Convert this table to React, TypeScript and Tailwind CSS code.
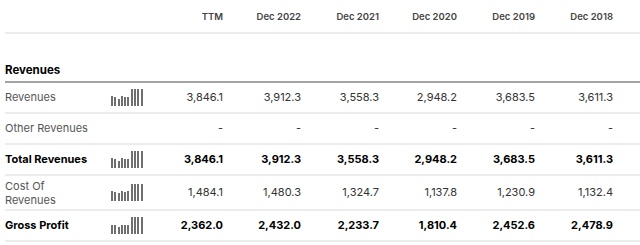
import React from "react";

type Row = {
  label: string;
  values: string[];
  bold?: boolean;
  bars?: number[];
  tall?: boolean;
};

const periods = ["TTM", "Dec 2022", "Dec 2021", "Dec 2020", "Dec 2019", "Dec 2018"];

const rows: Row[] = [
  {
    label: "Revenues",
    values: ["3,846.1", "3,912.3", "3,558.3", "2,948.2", "3,683.5", "3,611.3"],
    bars: [10, 9, 7, 10, 9, 9, 17, 17, 17, 17],
  },
  { label: "Other Revenues", values: ["-", "-", "-", "-", "-", "-"] },
  {
    label: "Total Revenues",
    values: ["3,846.1", "3,912.3", "3,558.3", "2,948.2", "3,683.5", "3,611.3"],
    bold: true,
    bars: [10, 9, 7, 10, 9, 9, 17, 17, 17, 17],
  },
  {
    label: "Cost Of Revenues",
    values: ["1,484.1", "1,480.3", "1,324.7", "1,137.8", "1,230.9", "1,132.4"],
    bars: [10, 9, 8, 10, 9, 10, 17, 17, 17, 17],
    tall: true,
  },
  {
    label: "Gross Profit",
    values: ["2,362.0", "2,432.0", "2,233.7", "1,810.4", "2,452.6", "2,478.9"],
    bold: true,
    bars: [9, 9, 7, 9, 9, 9, 17, 17, 17, 17],
  },
];

const grid = "grid grid-cols-[100px_40px_repeat(6,78px)_1fr]";

function Sparkbars({ bars }: { bars: number[] }) {
  return (
    <div className="flex h-[17px] items-end gap-[1.3px] pl-[6px]">
      {bars.map((h, i) => (
        <div key={i} className="w-[2px] bg-[#6f6f6f]" style={{ height: h }} />
      ))}
    </div>
  );
}

export default function App() {
  return (
    <div className="h-[245px] w-[640px] overflow-hidden bg-white pl-[5px] font-['Inter','Liberation_Sans',sans-serif] text-[11px] text-[#222]">
      <div className={`${grid} h-[34px] items-center border-b-2 border-[#ececec]`}>
        <div />
        <div />
        {periods.map((p) => (
          <div key={p} className="pt-[2px] text-right text-[9.5px] font-semibold text-[#444]">
            {p}
          </div>
        ))}
        <div />
      </div>
      <div className="flex h-[49px] items-end border-b-2 border-[#a3a3a3] pb-[2px] text-[11.5px] font-bold text-black">
        Revenues
      </div>
      {rows.map((r) => (
        <div
          key={r.label}
          className={`${grid} items-center border-b-2 border-[#ececec] ${r.tall ? "h-[35px]" : "h-[31px]"} ${
            r.bold ? "font-bold text-black" : "text-[#333]"
          }`}
        >
          <div className={`${r.tall ? "w-[60px] leading-[14px]" : ""} ${r.bold ? "" : "text-[#555]"}`}>{r.label}</div>
          <div>{r.bars && <Sparkbars bars={r.bars} />}</div>
          {r.values.map((v, i) => (
            <div key={i} className="text-right">
              {v}
            </div>
          ))}
          <div />
        </div>
      ))}
    </div>
  );
}
